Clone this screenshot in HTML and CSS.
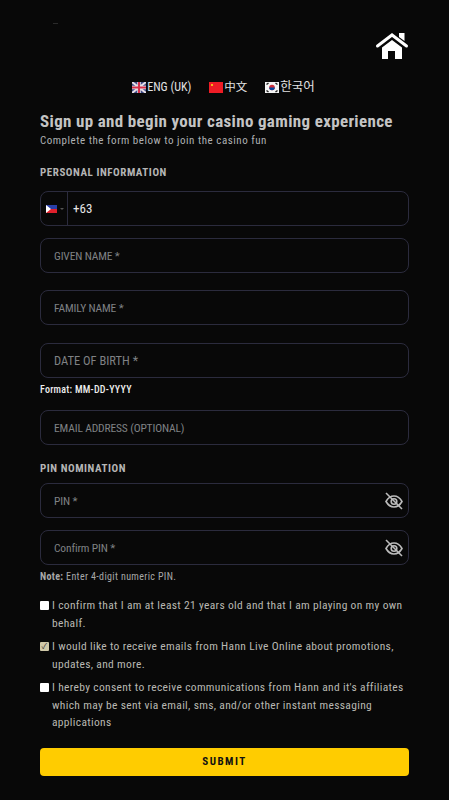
FILE: index.html
```html
<!DOCTYPE html>
<html lang="en">
  <head>
    <meta charset="utf-8" />
    <title>Sign up</title>
    <link rel="stylesheet" href="styles.css">
  </head>
  <body>
    <header>
      <span class="logo"></span>
      <a class="home" href="#">
        <svg width="34" height="26" viewBox="0 0 34 26">
          <path d="M24 0h5.500v8L24 4z" fill="#fff"/>
          <path d="M2.500 13 17 2l14.500 11" fill="none" stroke="#fff" stroke-width="3" stroke-linecap="round"/>
          <path d="M7 14.500 17 7l10 7.500V26H20V18h-7v8H7z" fill="#fff"/>
        </svg>
      </a>
    </header>

    <nav class="langs">
      <a href="#">
        <svg class="flag" width="14" height="11" viewBox="0 0 14 11">
          <rect width="14" height="11" fill="#3f4a86"/>
          <path d="M0 0l14 11M14 0L0 11" stroke="#e8dfe6" stroke-width="2"/>
          <path d="M7 0v11M0 5.500h14" stroke="#e8dfe6" stroke-width="3.500"/>
          <path d="M7 0v11M0 5.500h14" stroke="#d8304a" stroke-width="2"/>
        </svg>ENG (UK)
      </a>
      <a href="#">
        <svg class="flag" width="14" height="11" viewBox="0 0 14 11">
          <rect width="14" height="11" fill="#ee1c25"/>
          <rect x="2" y="2" width="2" height="2" fill="#f5b81c"/>
        </svg><span class="zh">中文</span>
      </a>
      <a href="#">
        <svg class="flag" width="14" height="11" viewBox="0 0 14 11">
          <rect width="14" height="11" fill="#f4f4f4"/>
          <path d="M1.500 2.500l2-1.500M1.500 8.500l2 1.500M12.500 2.500l-2-1.500M12.500 8.500l-2 1.500" stroke="#222" stroke-width="1.500"/>
          <circle cx="7" cy="5.500" r="2.800" fill="#cd2e3a"/>
          <path d="M4.200 5.500a2.800 2.800 0 0 0 5.600 0z" fill="#0047a0"/>
        </svg><span class="ko">한국어</span>
      </a>
    </nav>

    <main>
      <h1>Sign up and begin your casino gaming experience</h1>
      <p class="sub">Complete the form below to join the casino fun</p>

      <form>
        <h2>PERSONAL INFORMATION</h2>

        <div class="field phone">
          <div class="dial">
            <svg width="11" height="8" viewBox="0 0 11 8">
              <rect width="11" height="4" fill="#2a3fa8"/>
              <rect y="4" width="11" height="4" fill="#e0202c"/>
              <path d="M0 0l5 4-5 4z" fill="#fff"/>
            </svg>
            <span class="caret"></span>
          </div>
          <span class="value">+63</span>
        </div>

        <div class="field"><span class="ph">GIVEN NAME *</span></div>
        <div class="field family"><span class="ph">FAMILY NAME *</span></div>
        <div class="field birth"><span class="ph big">DATE OF BIRTH *</span></div>
        <p class="hint format">Format: MM-DD-YYYY</p>
        <div class="field email"><span class="ph">EMAIL ADDRESS (OPTIONAL)</span></div>

        <h2 class="pin-title">PIN NOMINATION</h2>

        <div class="field pin">
          <span class="ph">PIN *</span>
          <svg class="eye" width="20" height="20" viewBox="0 0 20 20" fill="none" stroke="#bcbcbc" stroke-width="1.600">
            <path d="M2 10.500C4 7 6.800 5 10 5s6 2 8 5.500c-2 3.500-4.800 5.500-8 5.500s-6-2-8-5.500z"/>
            <circle cx="10" cy="10.500" r="2.800"/>
            <path d="M2 2l16 16"/>
          </svg>
        </div>
        <div class="field pin">
          <span class="ph">Confirm PIN *</span>
          <svg class="eye" width="20" height="20" viewBox="0 0 20 20" fill="none" stroke="#bcbcbc" stroke-width="1.600">
            <path d="M2 10.500C4 7 6.800 5 10 5s6 2 8 5.500c-2 3.500-4.800 5.500-8 5.500s-6-2-8-5.500z"/>
            <circle cx="10" cy="10.500" r="2.800"/>
            <path d="M2 2l16 16"/>
          </svg>
        </div>
        <p class="hint note"><strong>Note:</strong> Enter 4-digit numeric PIN.</p>

        <label class="check"><span class="box"></span><span>I confirm that I am at least 21 years old and that I am playing on my own behalf.</span></label>
        <label class="check"><span class="box on">✓</span><span>I would like to receive emails from Hann Live Online about promotions, updates, and more.</span></label>
        <label class="check"><span class="box"></span><span>I hereby consent to receive communications from Hann and it's affiliates which may be sent via email, sms, and/or other instant messaging applications</span></label>

        <button type="button">SUBMIT</button>
      </form>
    </main>
  </body>
</html>
```

FILE: styles.css
```css
body {
  margin: 0;
  height: 800px;
  overflow: hidden;
  background: #080808;
  color: #c4c4c4;
  font-family: Roboto, "Noto Sans CJK KR", sans-serif;
  font-stretch: 75%;
}

header {
  display: flex;
  justify-content: space-between;
  height: 59px;
  padding: 23px 40px 0 53px;
  box-sizing: border-box;
}
.logo {
  width: 5px;
  height: 1px;
  background: #2a2a2a;
}
.home {
  display: block;
  height: 26px;
  margin-top: 10px;
}

.langs {
  display: flex;
  justify-content: center;
  gap: 18px;
  height: 20px;
  margin-top: 18px;
  padding-right: 2px;
  font-size: 12px;
  line-height: 20px;
}
.langs a {
  display: flex;
  align-items: center;
  color: #e2e2e2;
  text-decoration: none;
}
.langs .flag {
  margin-right: 1px;
}
.zh {
  font-size: 11.500px;
}
.ko {
  font-size: 12.500px;
}

main {
  padding: 0 40px;
}

h1 {
  margin: 14px 0 0;
  font-size: 17px;
  line-height: 20px;
  font-weight: 700;
  letter-spacing: 0.34px;
  white-space: nowrap;
}
.sub {
  margin: 3px 0 0;
  font-size: 11px;
  line-height: 14px;
  letter-spacing: 0.52px;
  color: #aeb0b2;
}

h2 {
  margin: 18px 0 11px;
  font-size: 11px;
  line-height: 14px;
  font-weight: 700;
  letter-spacing: 0.55px;
  color: #b5b5b5;
}
.pin-title {
  margin-top: 17px;
  margin-bottom: 7px;
}

.field {
  display: flex;
  align-items: center;
  justify-content: space-between;
  box-sizing: border-box;
  height: 35px;
  margin-bottom: 12px;
  padding: 0 13px;
  border: 1px solid #2b2b3d;
  border-radius: 8px;
}
.family {
  margin-top: 17px;
  margin-bottom: 18px;
}
.birth {
  margin-top: 18px;
}
.email {
  margin-bottom: 16px;
}
.ph {
  font-size: 11.500px;
  letter-spacing: -0.15px;
  color: #7f8184;
}
.ph.big {
  font-size: 12.500px;
  letter-spacing: 0;
}

.phone {
  justify-content: flex-start;
  padding: 0;
}
.dial {
  display: flex;
  align-items: center;
  width: 27px;
  height: 100%;
  padding-left: 5px;
  box-sizing: border-box;
  border-right: 1px solid #2b2b3d;
}
.caret {
  margin-left: 3px;
  border: 2px solid transparent;
  border-top-color: #555;
  border-bottom: 0;
}
.value {
  margin-left: 5px;
  font-size: 13px;
  color: #e6e6e6;
}

.pin {
  padding-right: 4px;
}

.hint {
  margin: -7px 0 0;
  font-size: 10px;
  line-height: 14px;
}
.format {
  margin-bottom: 13px;
  font-weight: 500;
  letter-spacing: 0.25px;
  color: #eeeeee;
}
.note {
  margin-bottom: 13px;
  letter-spacing: 0.35px;
  color: #a8a8a8;
}

.check {
  display: flex;
  margin-bottom: 6px;
  font-size: 11.500px;
  line-height: 17.500px;
  letter-spacing: 0.33px;
  color: #b8b8b2;
}
.box {
  flex: none;
  width: 9px;
  height: 9px;
  margin: 4px 3px 0 0;
  border-radius: 1px;
  background: #fff;
  color: #333;
  font-size: 8px;
  line-height: 9px;
  text-align: center;
}
.box.on {
  background: #cfc8a8;
}

button {
  display: block;
  width: 100%;
  height: 28px;
  margin-top: 16px;
  border: 0;
  border-radius: 4px;
  background: #ffcc00;
  color: #111;
  font-family: inherit;
  font-stretch: 75%;
  font-size: 11px;
  font-weight: 700;
  letter-spacing: 1.500px;
}
```
